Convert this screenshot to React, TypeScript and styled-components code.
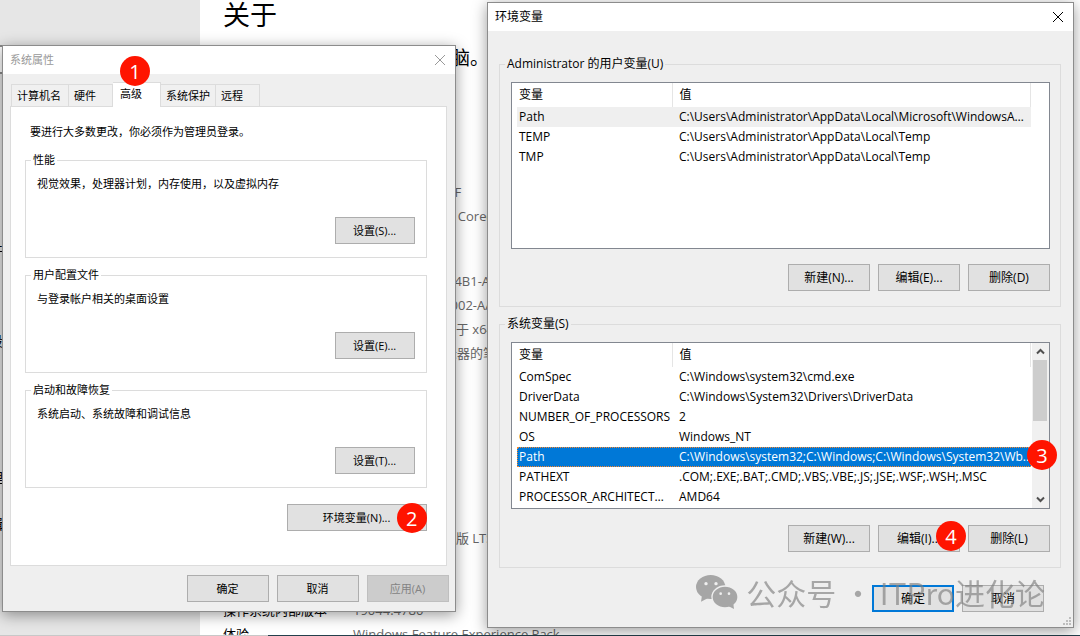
import React from 'react';
import styled, { createGlobalStyle, css } from 'styled-components';

const GlobalStyle = createGlobalStyle`
  * { box-sizing: border-box; }
  body {
    margin: 0;
    background: #fff;
    color: #000;
    font-family: 'Open Sans', 'Noto Sans CJK SC', sans-serif;
    font-size: 12px;
    line-height: 16px;
  }
  button, input { font: inherit; color: inherit; }
`;

/* ---------- Settings page behind the dialogs ---------- */

const Desktop = styled.main`
  position: relative;
  display: grid;
  grid-template-rows: 1fr 1px;
  height: 100vh;
  overflow: hidden;
`;

const SettingsPage = styled.div`
  display: flex;
  min-height: 0;
  overflow: hidden;
`;

const Sidebar = styled.nav`
  flex: 0 0 200px;
  display: flex;
  flex-direction: column;
  padding-top: 45px;
  background: #e6e6e6;
`;

const SearchBox = styled.input`
  width: 185px;
  height: 29px;
  margin-bottom: 166px;
  border: 2px solid #8a8a8a;
  border-width: 2px 2px 2px 0;
  background: #fff;
`;

const NavLink = styled.a<{ $gap: number }>`
  display: flex;
  justify-content: flex-end;
  width: 3px;
  height: 20px;
  margin-bottom: ${p => p.$gap}px;
  color: #000;
  font-size: 14px;
  line-height: 20px;
  text-decoration: none;
  white-space: nowrap;
`;

const About = styled.section`
  flex: 1;
  min-width: 0;
  padding-left: 23px;
`;

const PageTitle = styled.h1`
  margin: 0 0 18px;
  font-size: 27px;
  font-weight: 400;
  line-height: 30px;
`;

const Protection = styled.p`
  margin: 0 0 112px;
  font-size: 19px;
  line-height: 20px;
  white-space: nowrap;
`;

const Specs = styled.dl<{ $gap: number }>`
  display: grid;
  grid-template-columns: 130px 1fr;
  grid-auto-rows: 24px;
  margin: 0 0 ${p => p.$gap}px;
  font-size: 13px;
  line-height: 24px;
  white-space: nowrap;
`;

const Detail = styled.dd`
  margin: 0;
  color: #666;
`;

const Taskbar = styled.div`
  background: linear-gradient(to right, #c8c8c8 268px, #24404c 268px);
`;

/* ---------- Shared dialog parts ---------- */

const Dialog = styled.section`
  position: absolute;
  border: 1px solid #8c8c8c;
  background: #efefef;
  box-shadow: 0 3px 14px rgba(0, 0, 0, 0.4);
`;

const TitleBar = styled.header<{ $inactive?: boolean }>`
  display: flex;
  align-items: center;
  justify-content: space-between;
  height: 28px;
  padding: 0 9px 0 7px;
  background: #fff;
  color: ${p => (p.$inactive ? '#999' : '#000')};
`;

const Title = styled.h2`
  margin: 0;
  font-size: inherit;
  font-weight: 400;
`;

const CloseButton = styled.button`
  display: flex;
  padding: 0;
  border: 0;
  background: none;
`;

const Group = styled.fieldset`
  min-width: 0;
  margin: 0 0 9px;
  border: 1px solid #dcdcdc;
`;

const Legend = styled.legend`
  height: 16px;
  margin-left: -6px;
  padding: 0 2px;
`;

const PushButton = styled.button<{ $wide?: boolean; $focused?: boolean }>`
  width: ${p => (p.$wide ? 140 : 82)}px;
  height: 27px;
  padding: 0;
  border: 1px solid #adadad;
  background: #e1e1e1;
  line-height: 16px;
  text-align: center;
  white-space: nowrap;

  ${p => p.$focused && css`
    border: 2px solid #0078d7;
  `}

  &:disabled {
    border-color: #bfbfbf;
    background: #ccc;
    color: #838383;
  }
`;

const ButtonRow = styled.div<{ $top: number }>`
  display: flex;
  justify-content: flex-end;
  gap: 8px;
  margin-top: ${p => p.$top}px;
`;

const Badged = styled.span`
  position: relative;
  display: flex;
`;

const Badge = styled.span<{ $right: number; $top: number }>`
  position: absolute;
  z-index: 1;
  right: ${p => p.$right}px;
  top: ${p => p.$top}px;
  width: 30px;
  height: 30px;
  border-radius: 50%;
  background: #ff1400;
  color: #fff;
  font-size: 20px;
  line-height: 31px;
  text-align: center;
`;

/* ---------- System properties ---------- */

const PropertiesDialog = styled(Dialog)`
  left: 2px;
  top: 45px;
  width: 42%;
  font-size: 11px;
`;

const PropertiesBody = styled.div`
  padding: 8px 8px 9px 7px;
`;

const Tabs = styled.div`
  display: flex;
  align-items: flex-end;
  height: 24px;
  padding-left: 1px;
`;

const Tab = styled.button<{ $width: number; $selected?: boolean }>`
  position: relative;
  width: ${p => p.$width}px;
  height: 22px;
  padding: 0 0 0 5px;
  border: 1px solid #dcdcdc;
  border-width: 1px 1px 0 0;
  background: #f0f0f0;
  text-align: left;
  white-space: nowrap;

  &:first-child { border-left-width: 1px; }

  ${p => p.$selected && css`
    height: 25px;
    margin-bottom: -1px;
    padding: 0 0 3px 7px;
    background: #fff;
  `}
`;

const TabPanel = styled.div`
  padding: 17px 19px 34px 14px;
  border: 1px solid #dcdcdc;
  background: #fff;
`;

const Notice = styled.p`
  margin: 0 0 12px;
  padding-left: 5px;
`;

const OptionGroup = styled(Group)`
  padding: 8px 11px 13px;

  p { margin: 0; }
  button { width: 80px; }
`;

const FooterButtons = styled.div`
  display: flex;
  justify-content: flex-end;
  gap: 8px;
  padding-top: 9px;
  margin-right: -2px;
`;

/* ---------- Environment variables ---------- */

const VariablesDialog = styled(Dialog)`
  left: 487px;
  right: 6px;
  top: 2px;
`;

const VariablesBody = styled.div`
  padding: 25px 12px 15px 11px;
`;

const VariableGroup = styled(Group)`
  padding: 10px 10px 15px 11px;
`;

const ListBox = styled.div`
  display: flex;
  height: 167px;
  padding-left: 5px;
  border: 1px solid #828790;
  background: #fff;
`;

const ListArea = styled.div`
  flex: 1;
  min-width: 0;
`;

const Table = styled.table`
  width: 100%;
  border-collapse: collapse;
  table-layout: fixed;

  th, td {
    padding: 0 0 0 2px;
    overflow: hidden;
    font-weight: 400;
    text-align: left;
    text-overflow: ellipsis;
    white-space: nowrap;
  }
  th { height: 24px; border-right: 1px solid #e5e5e5; }
  th:first-child { width: 155px; }
  td { height: 20px; }
  th + th, td + td { padding-left: 7px; }
`;

const Row = styled.tr<{ $state?: 'hover' | 'selected' }>`
  ${p => p.$state === 'hover' && css`background: #efefef;`}
  ${p => p.$state === 'selected' && css`
    background: #0078d7;
    color: #fff;
    outline: 1px dotted #ff8728;
    outline-offset: -1px;

    td { overflow: visible; }
  `}
`;

const Gutter = styled.div`
  width: 18px;
`;

const ScrollBar = styled.div`
  display: flex;
  flex-direction: column;
  width: 17px;
  margin-left: 1px;
  background: #f0f0f0;
`;

const ScrollButton = styled.button`
  display: flex;
  align-items: center;
  justify-content: center;
  height: 17px;
  padding: 0;
  border: 0;
  background: none;
`;

const ScrollTrack = styled.div`
  flex: 1;
`;

const ScrollThumb = styled.div`
  height: 61px;
  margin: 0 2px 0 1px;
  background: #cdcdcd;
`;

const ConfirmRow = styled.div`
  display: flex;
  justify-content: flex-end;
  gap: 8px;
  margin: 17px 17px 0 0;
`;

const Grip = styled.svg`
  position: absolute;
  right: 1px;
  bottom: 1px;
`;

const Watermark = styled.div`
  position: absolute;
  z-index: 2;
  right: 28px;
  bottom: 15px;
  display: flex;
  align-items: center;
  gap: 8px;
  color: #808080;
  opacity: 0.65;
  font-family: 'Noto Sans CJK SC', sans-serif;
  font-size: 30px;
  line-height: 40px;
  white-space: nowrap;
  pointer-events: none;
`;

const Cross = () => (
  <svg width="12" height="12" viewBox="0 0 12 12" stroke="currentColor" strokeWidth="1" fill="none">
    <path d="M1 1l10 10M11 1L1 11" />
  </svg>
);

const Chevron = ({ down }: { down?: boolean }) => (
  <svg width="9" height="7" viewBox="0 0 9 7" stroke="#505050" strokeWidth="2" fill="none">
    <path d={down ? 'M1 1.5l3.5 3.5L8 1.5' : 'M1 5.5L4.5 2 8 5.5'} />
  </svg>
);

/* Two overlapping chat bubbles with eyes */
const ChatLogo = () => (
  <svg width="42" height="34" viewBox="0 0 126 102" fill="currentColor" aria-hidden="true">
    <mask id="bubble-gap">
      <rect width="126" height="102" fill="#fff" />
      <ellipse cx="87" cy="66" rx="41" ry="35" fill="#000" />
      <circle cx="30" cy="26" r="5" fill="#000" />
      <circle cx="60" cy="26" r="5" fill="#000" />
    </mask>
    <g mask="url(#bubble-gap)">
      <ellipse cx="44" cy="36" rx="44" ry="36" />
      <path d="M18 60l-3 20 20-10z" />
    </g>
    <path
      fillRule="evenodd"
      d="M50 66a37 31 0 1 1 74 0a37 31 0 1 1-74 0zM70 56a4 4 0 1 0 8 0a4 4 0 1 0-8 0zM95 56a4 4 0 1 0 8 0a4 4 0 1 0-8 0z"
    />
    <path d="M98 94l16 8-2-16z" />
  </svg>
);

const deviceSpecs = [
  ['设备名称', 'DESKTOP-K7Q25F'],
  ['处理器', '11th Gen Intel(R) Core(TM) i5'],
  ['机带 RAM', '16.0 GB'],
];
const deviceIds = [
  ['设备 ID', '3F0C8D5E-91D2-4B1-A7C3'],
  ['产品 ID', '00425-00000-00002-AA345'],
  ['系统类型', '64 位操作系统, 基于 x64 的处理器'],
  ['笔和触控', '没有可用于此显示器的笔或触控输入'],
];
const windowsSpecs = [
  ['版本', 'Windows 10 企业版 LTSC'],
  ['版本号', '21H2'],
  ['安装日期', '2024/8/12'],
  ['操作系统内部版本', '19044.4780'],
  ['体验', 'Windows Feature Experience Pack'],
];

const options = [
  { title: '性能', text: '视觉效果，处理器计划，内存使用，以及虚拟内存', key: 'S' },
  { title: '用户配置文件', text: '与登录帐户相关的桌面设置', key: 'E' },
  { title: '启动和故障恢复', text: '系统启动、系统故障和调试信息', key: 'T' },
];

const userVariables = [
  ['Path', 'C:\\Users\\Administrator\\AppData\\Local\\Microsoft\\WindowsApps;'],
  ['TEMP', 'C:\\Users\\Administrator\\AppData\\Local\\Temp'],
  ['TMP', 'C:\\Users\\Administrator\\AppData\\Local\\Temp'],
];
const systemVariables = [
  ['ComSpec', 'C:\\Windows\\system32\\cmd.exe'],
  ['DriverData', 'C:\\Windows\\System32\\Drivers\\DriverData'],
  ['NUMBER_OF_PROCESSORS', '2'],
  ['OS', 'Windows_NT'],
  ['Path', 'C:\\Windows\\system32;C:\\Windows;C:\\Windows\\System32\\Wb...'],
  ['PATHEXT', '.COM;.EXE;.BAT;.CMD;.VBS;.VBE;.JS;.JSE;.WSF;.WSH;.MSC'],
  ['PROCESSOR_ARCHITECTURE', 'AMD64'],
];

const SpecList = ({ rows, gap }: { rows: string[][]; gap: number }) => (
  <Specs $gap={gap}>
    {rows.map(([term, detail]) => (
      <React.Fragment key={term}>
        <dt>{term}</dt>
        <Detail>{detail}</Detail>
      </React.Fragment>
    ))}
  </Specs>
);

const VariableTable = ({ rows, state }: { rows: string[][]; state: 'hover' | 'selected' }) => (
  <ListArea>
    <Table>
      <thead>
        <tr><th scope="col">变量</th><th scope="col">值</th></tr>
      </thead>
      <tbody>
        {rows.map(([name, value]) => (
          <Row key={name} $state={name === 'Path' ? state : undefined}>
            <td>{name}</td>
            <td>{value}</td>
          </Row>
        ))}
      </tbody>
    </Table>
  </ListArea>
);

export default function App() {
  return (
    <>
      <GlobalStyle />
      <Desktop>
        <SettingsPage>
          <Sidebar>
            <SearchBox aria-label="查找设置" />
            <NavLink href="#" $gap={71}>附件</NavLink>
            <NavLink href="#" $gap={117}>时段</NavLink>
            <NavLink href="#" $gap={26}>管理</NavLink>
            <NavLink href="#" $gap={0}>剪辑</NavLink>
          </Sidebar>
          <About>
            <PageTitle>关于</PageTitle>
            <Protection>系统正在监控并保护你的电脑。</Protection>
            <SpecList rows={deviceSpecs} gap={17} />
            <SpecList rows={deviceIds} gap={161} />
            <SpecList rows={windowsSpecs} gap={0} />
          </About>
        </SettingsPage>
        <Taskbar />

        <PropertiesDialog aria-label="系统属性">
          <TitleBar $inactive>
            <Title>系统属性</Title>
            <CloseButton aria-label="关闭"><Cross /></CloseButton>
          </TitleBar>
          <PropertiesBody>
            <Tabs role="tablist">
              <Tab role="tab" $width={58}>计算机名</Tab>
              <Tab role="tab" $width={44}>硬件</Tab>
              <Tab role="tab" $width={48} $selected aria-selected>
                高级
                <Badge $right={10} $top={-27}>1</Badge>
              </Tab>
              <Tab role="tab" $width={55}>系统保护</Tab>
              <Tab role="tab" $width={44}>远程</Tab>
            </Tabs>
            <TabPanel role="tabpanel">
              <Notice>要进行大多数更改，你必须作为管理员登录。</Notice>
              {options.map(option => (
                <OptionGroup key={option.key}>
                  <Legend>{option.title}</Legend>
                  <p>{option.text}</p>
                  <ButtonRow $top={25}>
                    <PushButton>设置({option.key})...</PushButton>
                  </ButtonRow>
                </OptionGroup>
              ))}
              <ButtonRow $top={16}>
                <Badged>
                  <PushButton $wide>环境变量(N)...</PushButton>
                  <Badge $right={0} $top={-1}>2</Badge>
                </Badged>
              </ButtonRow>
            </TabPanel>
            <FooterButtons>
              <PushButton>确定</PushButton>
              <PushButton>取消</PushButton>
              <PushButton disabled>应用(A)</PushButton>
            </FooterButtons>
          </PropertiesBody>
        </PropertiesDialog>

        <VariablesDialog aria-label="环境变量">
          <TitleBar>
            <Title>环境变量</Title>
            <CloseButton aria-label="关闭"><Cross /></CloseButton>
          </TitleBar>
          <VariablesBody>
            <VariableGroup>
              <Legend>Administrator 的用户变量(U)</Legend>
              <ListBox>
                <VariableTable rows={userVariables} state="hover" />
                <Gutter />
              </ListBox>
              <ButtonRow $top={15}>
                <PushButton>新建(N)...</PushButton>
                <PushButton>编辑(E)...</PushButton>
                <PushButton>删除(D)</PushButton>
              </ButtonRow>
            </VariableGroup>
            <VariableGroup>
              <Legend>系统变量(S)</Legend>
              <Badged>
                <Badge $right={-7} $top={98}>3</Badge>
              </Badged>
              <ListBox>
                <VariableTable rows={systemVariables} state="selected" />
                <ScrollBar>
                  <ScrollButton aria-label="向上滚动"><Chevron /></ScrollButton>
                  <ScrollTrack><ScrollThumb /></ScrollTrack>
                  <ScrollButton aria-label="向下滚动"><Chevron down /></ScrollButton>
                </ScrollBar>
              </ListBox>
              <ButtonRow $top={16}>
                <PushButton>新建(W)...</PushButton>
                <Badged>
                  <PushButton>编辑(I)...</PushButton>
                  <Badge $right={-6} $top={-4}>4</Badge>
                </Badged>
                <PushButton>删除(L)</PushButton>
              </ButtonRow>
            </VariableGroup>
            <ConfirmRow>
              <PushButton $focused>确定</PushButton>
              <PushButton>取消</PushButton>
            </ConfirmRow>
          </VariablesBody>
          <Grip width="10" height="10" viewBox="0 0 10 10" fill="#bdbdbd">
            <path d="M7 1h2v2H7zM7 4h2v2H7zM7 7h2v2H7zM4 4h2v2H4zM4 7h2v2H4zM1 7h2v2H1z" />
          </Grip>
          <Watermark>
            <ChatLogo />
            <span>公众号 · ITPro进化论</span>
          </Watermark>
        </VariablesDialog>
      </Desktop>
    </>
  );
}
